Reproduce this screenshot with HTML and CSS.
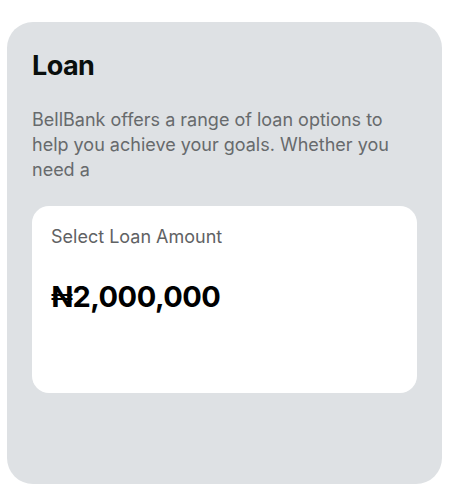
FILE: index.html
```html
<!DOCTYPE html>
<html>
<head>
<meta charset="utf-8">
<link rel="stylesheet" href="styles.css">
</head>
<body>
<section class="loan-card">
  <h1 class="loan-title">Loan</h1>
  <p class="loan-desc">BellBank offers a range of loan options to help you achieve your goals. Whether you need a</p>
  <div class="amount-card">
    <div class="amount-label">Select Loan Amount</div>
    <div class="amount-value">₦2,000,000</div>
  </div>
</section>
</body>
</html>
```

FILE: styles.css
```css
html, body {
  margin: 0;
  padding: 0;
  background: #ffffff;
}
body {
  padding: 22px 13px 10px 7px;
  font-family: Inter, "Noto Sans", sans-serif;
}
.loan-card {
  box-sizing: border-box;
  width: 435px;
  height: 462px;
  background: #dee1e4;
  border-radius: 26px;
  padding: 27px 25px 24px;
  display: flex;
  flex-direction: column;
}
.loan-title {
  margin: 0;
  font-size: 27px;
  line-height: 34px;
  font-weight: 700;
  color: #0a0f0d;
  letter-spacing: -0.6px;
}
.loan-desc {
  margin: 24px 0 0;
  font-size: 18px;
  line-height: 25px;
  color: #676a6c;
}
.amount-card {
  margin-top: 24px;
  height: 187px;
  box-sizing: border-box;
  background: #ffffff;
  border-radius: 17px;
  padding: 19px 19px;
}
.amount-label {
  font-size: 18px;
  line-height: 24px;
  color: #5f6264;
}
.amount-value {
  margin-top: 30px;
  font-size: 29px;
  line-height: 36px;
  font-weight: 700;
  color: #000;
  letter-spacing: -0.5px;
}
```
